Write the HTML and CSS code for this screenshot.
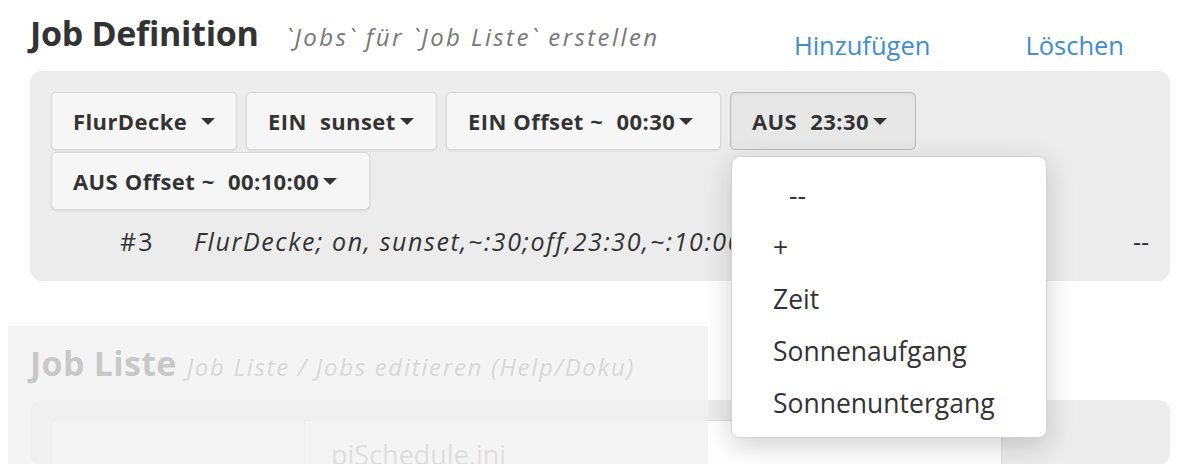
FILE: index.html
```html
<!DOCTYPE html>
<html lang="de">
<head>
<meta charset="utf-8">
<title>Job Definition</title>
<link rel="stylesheet" href="styles.css">
</head>
<body>
<div class="app">
  <section class="jobdef">
    <header class="sec-head">
      <h1 class="title">Job Definition</h1>
      <span class="subtitle">`Jobs` für `Job Liste` erstellen</span>
      <nav class="actions">
        <a class="action">Hinzufügen</a>
        <a class="action">Löschen</a>
      </nav>
    </header>
    <div class="panel">
      <div class="btns">
        <div class="sel"><button class="btn btn-device">FlurDecke<span class="caret"></span></button></div>
        <div class="sel"><button class="btn btn-on">EIN  sunset<span class="caret"></span></button></div>
        <div class="sel"><button class="btn btn-on-offset">EIN Offset ~  00:30<span class="caret"></span></button></div>
        <div class="sel">
          <button class="btn btn-off active">AUS  23:30<span class="caret"></span></button>
          <ul class="menu">
            <li class="item item-empty">--</li>
            <li class="item">+</li>
            <li class="item">Zeit</li>
            <li class="item">Sonnenaufgang</li>
            <li class="item">Sonnenuntergang</li>
          </ul>
        </div>
        <div class="sel"><button class="btn btn-off-offset">AUS Offset ~  00:10:00<span class="caret"></span></button></div>
      </div>
      <div class="job-row">
        <span class="num">#3</span>
        <span class="def">FlurDecke; on, sunset,~:30;off,23:30,~:10:00</span>
        <span class="dash">--</span>
      </div>
    </div>
  </section>

  <section class="joblist">
    <header class="sec-head2">
      <h2 class="title2">Job Liste</h2>
      <span class="subtitle2">Job Liste / Jobs editieren (Help/Doku)</span>
    </header>
    <div class="panel panel2">
      <div class="table">
        <div class="cell cell-a"></div>
        <div class="cell cell-b">piSchedule.ini</div>
      </div>
    </div>
  </section>
</div>
<div class="overlay"></div>
</body>
</html>
```

FILE: styles.css
```css
html, body {
  margin: 0;
  height: 464px;
  overflow: hidden;
}
body {
  position: relative;
  font-family: "Open Sans", "Noto Sans", sans-serif;
  color: #333;
  background: #fff;
}
.app {
  padding: 0 30px;
}

/* ---------- header ---------- */
.sec-head {
  display: flex;
  align-items: baseline;
  height: 71px;
}
.title {
  margin: 0;
  padding-top: 16px;
  font-size: 34px;
  line-height: 1;
  font-weight: 700;
  letter-spacing: -0.3px;
  color: #333;
}
.subtitle {
  margin-left: 27px;
  font-size: 24px;
  font-style: italic;
  color: #777;
  letter-spacing: 2.4px;
}
.actions {
  margin-left: auto;
  align-self: flex-end;
  display: flex;
  gap: 95px;
  padding: 0 46px 13px 0;
}
.action {
  font-size: 25.5px;
  line-height: 1;
  color: #3d8ed3;
  cursor: pointer;
}

/* ---------- panel ---------- */
.panel {
  background: #ececec;
  border-radius: 12px;
  padding: 21px 21px 13px;
}
.btns {
  display: flex;
  flex-wrap: wrap;
  column-gap: 9px;
  row-gap: 2px;
}
.sel {
  position: relative;
}
.btn {
  display: flex;
  align-items: center;
  justify-content: flex-start;
  box-sizing: border-box;
  height: 58px;
  padding: 0 21px;
  font-family: inherit;
  font-size: 22px;
  font-weight: 700;
  letter-spacing: 0.4px;
  word-spacing: 0.5px;
  color: #333;
  white-space: pre;
  text-shadow: 0 1px 0 #fff;
  background: #f6f6f6;
  border: 1px solid #d8d8d8;
  border-radius: 5px;
  box-shadow: 0 1px 2px rgba(0, 0, 0, 0.08);
}
.btn-device {
  width: 186px;
  justify-content: space-between;
}
.btn-on { width: 191px; }
.btn-on-offset { width: 275px; }
.btn-off { width: 186px; }
.btn-off-offset { width: 319px; }
.btn.active {
  background: #e7e7e7;
  border-color: #bcbcbc;
  box-shadow: inset 0 1px 3px rgba(0, 0, 0, 0.08);
}
.caret {
  display: inline-block;
  margin-left: 4px;
  width: 0;
  height: 0;
  border-left: 7px solid transparent;
  border-right: 7px solid transparent;
  border-top: 7px solid #333;
}

/* ---------- dropdown menu ---------- */
.menu {
  position: absolute;
  z-index: 5;
  left: 1px;
  top: calc(100% + 6px);
  width: 316px;
  margin: 0;
  padding: 12px 0 8px;
  list-style: none;
  background: #fff;
  border: 1px solid #d2d2d2;
  border-radius: 8px;
  box-shadow: 0 8px 28px rgba(0, 0, 0, 0.18);
  box-sizing: border-box;
}
.item {
  height: 52px;
  display: flex;
  align-items: center;
  padding-left: 41px;
  font-size: 26.5px;
  color: #333;
}
.item-empty {
  padding-left: 57px;
}

/* ---------- job row ---------- */
.job-row {
  display: flex;
  align-items: center;
  height: 50px;
  margin-top: 6px;
  margin-bottom: 2px;
  padding-left: 69px;
  font-size: 25px;
  white-space: nowrap;
  color: #333;
}
.num {
  width: 74px;
  letter-spacing: 2px;
}
.def {
  font-style: italic;
  letter-spacing: 1.6px;
}
.dash {
  margin-left: auto;
  padding-right: 0;
}

/* ---------- job list ---------- */
.joblist {
  margin-top: 45px;
}
.sec-head2 {
  display: flex;
  align-items: baseline;
  height: 74px;
}
.title2 {
  margin: 0;
  padding-top: 20px;
  font-size: 34px;
  line-height: 1;
  font-weight: 700;
  letter-spacing: 0.3px;
  color: #333;
}
.subtitle2 {
  margin-left: 10px;
  font-size: 24px;
  font-style: italic;
  color: #777;
  letter-spacing: 1.7px;
}
.panel2 {
  padding: 20px 168px 0 21px;
}
.table {
  display: flex;
  height: 44px;
  overflow: hidden;
  background: #fff;
  border: 1px solid #dcdcdc;
  border-bottom: 0;
  border-radius: 6px 0 0 0;
}
.cell-a {
  width: 252px;
  border-right: 1px solid #dcdcdc;
}
.cell-b {
  flex: 1;
  padding: 16px 0 0 26px;
  font-size: 27px;
  line-height: 1.3;
  color: #999;
}

/* ---------- fading overlay ---------- */
.overlay {
  position: absolute;
  left: 8px;
  top: 326px;
  width: 700px;
  bottom: 0;
  background: rgba(241, 241, 241, 0.79);
}
```
